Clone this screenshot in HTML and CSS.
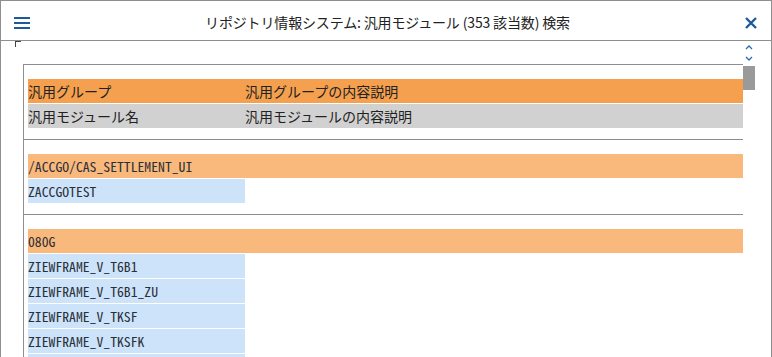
FILE: index.html
```html
<!DOCTYPE html>
<html lang="ja">
<head>
  <meta charset="UTF-8" />
  <title>リポジトリ情報システム</title>
  <link rel="stylesheet" href="styles.css">
</head>
<body>

  <div class="window">
    <header class="titlebar">
      <svg class="menu" width="16" height="12" viewBox="0 0 16 12">
        <rect x="0" y="0" width="16" height="2" fill="#1d5a9c"/>
        <rect x="0" y="5" width="16" height="2" fill="#1d5a9c"/>
        <rect x="0" y="10" width="16" height="2" fill="#1d5a9c"/>
      </svg>
      <div class="title">リポジトリ情報システム: 汎用モジュール (353 該当数) 検索</div>
      <svg class="close" width="12" height="12" viewBox="0 0 12 12">
        <path d="M1 1 L11 11 M11 1 L1 11" stroke="#1d5a9c" stroke-width="2.4" fill="none"/>
      </svg>
    </header>

    <div class="toolbar">
      <span class="corner"></span>
      <div class="arrows">
        <svg width="8" height="5" viewBox="0 0 8 5"><path d="M1 4 L4 1 L7 4" stroke="#2b6cb0" stroke-width="1.3" fill="none"/></svg>
        <svg width="8" height="5" viewBox="0 0 8 5"><path d="M1 1 L4 4 L7 1" stroke="#2b6cb0" stroke-width="1.3" fill="none"/></svg>
      </div>
    </div>

    <div class="main">
      <div class="box">
        <div class="group">
          <div class="row head">
            <span class="cell">汎用グループ</span>
            <span class="cell">汎用グループの内容説明</span>
          </div>
          <div class="row sub">
            <span class="cell">汎用モジュール名</span>
            <span class="cell">汎用モジュールの内容説明</span>
          </div>
        </div>

        <div class="group">
          <div class="row grp"><span class="cell mono">/ACCGO/CAS_SETTLEMENT_UI</span></div>
          <div class="row"><span class="cell mono item">ZACCGOTEST</span></div>
        </div>

        <div class="group">
          <div class="row grp"><span class="cell mono">080G</span></div>
          <div class="row"><span class="cell mono item">ZIEWFRAME_V_T6B1</span></div>
          <div class="row"><span class="cell mono item">ZIEWFRAME_V_T6B1_ZU</span></div>
          <div class="row"><span class="cell mono item">ZIEWFRAME_V_TKSF</span></div>
          <div class="row"><span class="cell mono item">ZIEWFRAME_V_TKSFK</span></div>
          <div class="row"><span class="cell mono item"></span></div>
        </div>
      </div>
      <div class="scroll">
        <div class="thumb"></div>
      </div>
    </div>
  </div>

</body>
</html>
```

FILE: styles.css
```css
* {
  margin: 0;
  padding: 0;
  box-sizing: border-box;
}

html, body {
  width: 772px;
  height: 357px;
  overflow: hidden;
  background-color: #fff;
  font-family: "Noto Sans CJK JP", "Noto Sans", sans-serif;
  color: #222;
}

.window {
  height: 357px;
  border-top: 1px solid #8e8e8e;
  border-left: 1px solid #8e8e8e;
  border-right: 1px solid #8e8e8e;
  overflow: hidden;
}

/* title bar */
.titlebar {
  height: 40px;
  border-bottom: 1px solid #8e8e8e;
  display: flex;
  align-items: center;
  padding: 0 14px 0 13px;
}

.menu {
  display: block;
  margin-top: 4px;
}

.title {
  flex: 1;
  text-align: center;
  font-size: 14px;
  letter-spacing: -0.15px;
  color: #222;
  margin-top: 2px;
}

.close {
  display: block;
  margin-top: 5px;
}

/* toolbar under the title */
.toolbar {
  height: 23px;
  display: flex;
  justify-content: space-between;
  padding: 0 18px 0 14px;
}

.corner {
  width: 6px;
  height: 6px;
  border-top: 1.5px solid #444;
  border-left: 1.5px solid #444;
}

.arrows {
  display: flex;
  flex-direction: column;
  gap: 6px;
  padding-top: 4px;
}

.arrows svg {
  display: block;
}

/* list area */
.main {
  display: flex;
  padding-left: 22px;
}

.box {
  width: 720px;
  border-top: 1px solid #8e8e8e;
  border-left: 1px solid #8e8e8e;
}

.scroll {
  width: 12px;
  padding-top: 2px;
}

.thumb {
  height: 24px;
  background-color: #9a9a9a;
}

.group {
  padding: 14px 0 10px 4px;
  border-bottom: 1px solid #8e8e8e;
}

.row {
  display: flex;
  height: 24px;
  margin-bottom: 1px;
  font-size: 14px;
  line-height: 24px;
}

.cell {
  width: 217px;
  white-space: nowrap;
}

.row.head {
  background-color: #f4a04e;
}

.row.sub {
  background-color: #d1d1d1;
}

.row.grp {
  background-color: #f9b87c;
}

.mono {
  font-family: "Noto Sans Mono CJK JP", "Liberation Mono", monospace;
  font-size: 13.7px;
  color: #2a2f38;
}

.item {
  background-color: #cce3fa;
}
```
